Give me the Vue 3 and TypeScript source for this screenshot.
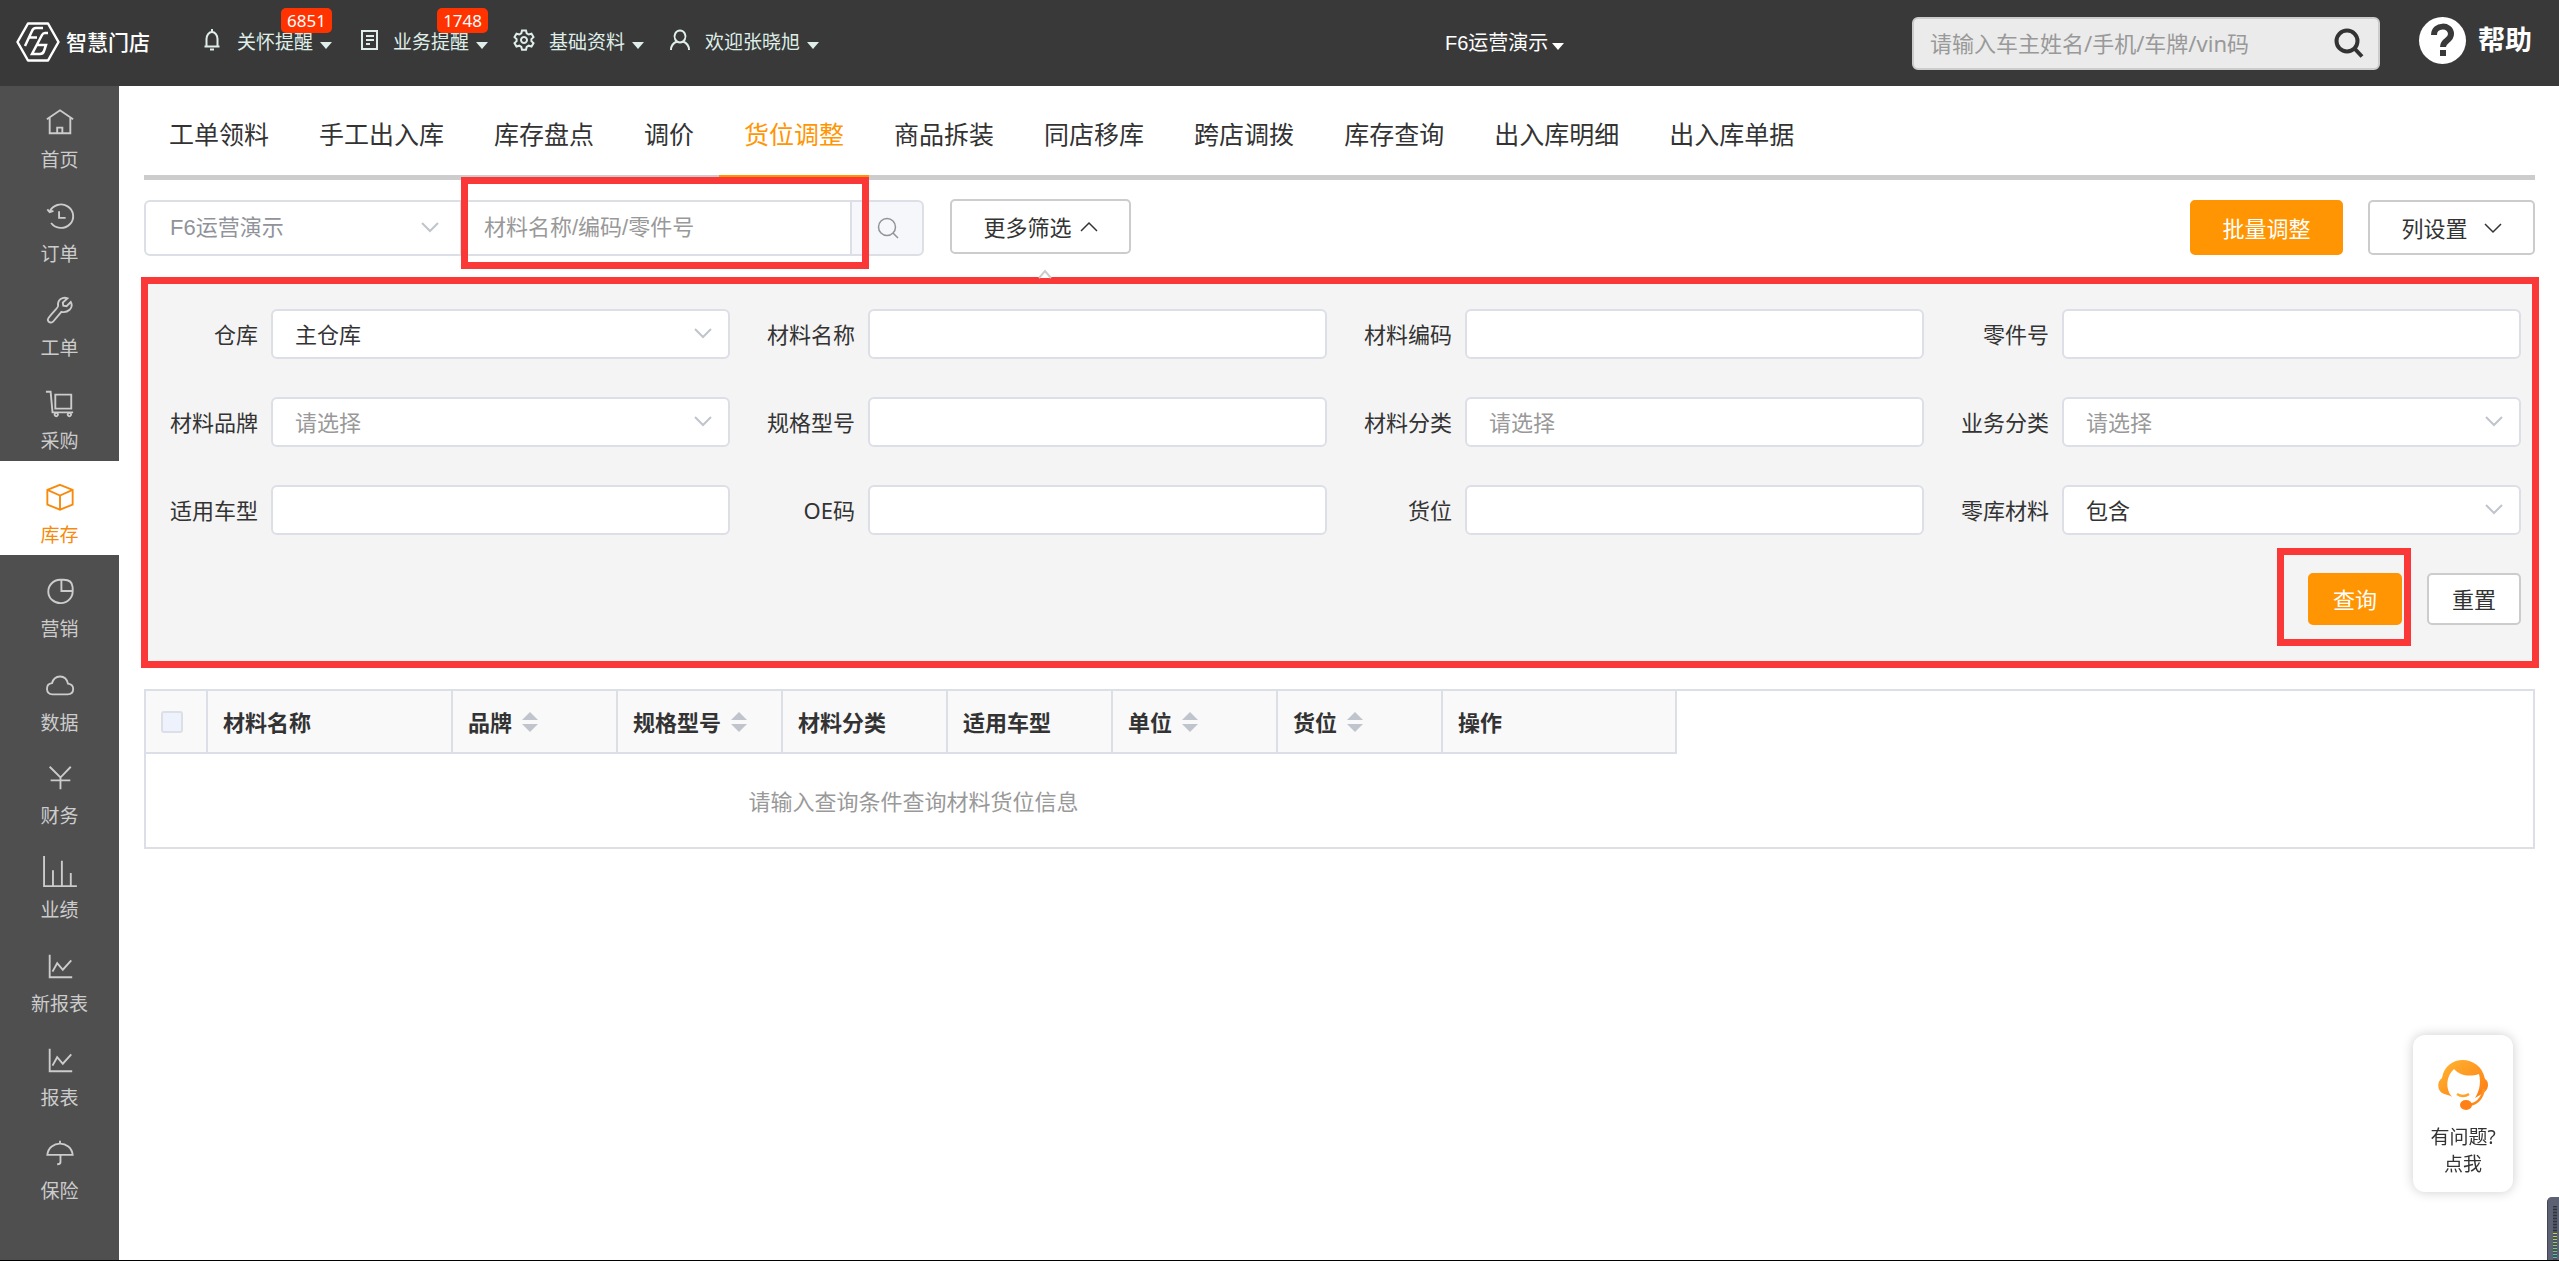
<script setup lang="ts">
import { ref } from 'vue'

interface NavItem {
  label: string
  icon: string[]
  count?: string
}

interface Field {
  id: string
  label: string
  kind: 'input' | 'select'
  value?: string
  placeholder?: string
}

interface Column {
  label: string
  width: number
  sortable?: boolean
}

const notices: NavItem[] = [
  { label: '关怀提醒', count: '6851', icon: ['M11 0v3M5.500 17V10a5.500 7 0 0 1 11 0v7M3.500 17.500h15M9 20.500h4'] },
  { label: '业务提醒', count: '1748', icon: ['M5 2h15v18H5zM9 7h8M9 11h8M9 15h4'] },
  { label: '基础资料', icon: ['M9 1.500h4l.7 2.800 2 1.200 2.800-.8 2 3.400-2.100 2v2l2.100 2-2 3.400-2.800-.8-2 1.200-.7 2.800H9l-.7-2.800-2-1.200-2.800.8-2-3.400 2.100-2v-2l-2.100-2 2-3.400 2.800.8 2-1.200z', 'M11 8a3 3 0 1 0 .01 0z'] },
  { label: '欢迎张晓旭', icon: ['M11 1.500a5.500 6 0 1 0 .01 0z', 'M2 21c0-4 2-7 6-8.500M20 21c0-4-2-7-6-8.500'] },
]

const menus: NavItem[] = [
  { label: '首页', icon: ['M2 13 16 3.500 30 13M5 11.500V28h22V11.500', 'M13 28v-6h5.500v6'] },
  { label: '订单', icon: ['M5 11.500A13 12.500 0 1 1 6.500 23.500M2.500 9l2.500 3 4-1.500', 'M15 11v7h7'] },
  { label: '工单', icon: ['M27.500 7.500 23 12l-3.500-.5L19 8l5-4.500C19 1.500 13 5 14 11.500 14.500 14 3 23 3 26.500 3.500 30 7.500 30 9 28L17.500 18C24 19.500 31 14 27.500 7.500z'] },
  { label: '采购', icon: ['M1 4h5l2 22h22', 'M11 7h17v15H11z', 'M12 26.500a1.800 1.800 0 1 0 .01 0zM26 26.500a1.800 1.800 0 1 0 .01 0z'] },
  { label: '库存', icon: ['M16 3 29.500 8.500V24L16 29.500 2.500 24V8.500z', 'M2.500 8.500 16 14.500l13.500-6M16 14.500v15'] },
  { label: '营销', icon: ['M17.500 4v12H30', 'M16 4a13 12.500 0 1 0 13.500 12V12Q29 4 20 4z'] },
  { label: '数据', icon: ['M8 26H24C32 25.500 32 15.500 24.500 14.500 22 4 10 5 7.500 14 0 15 .5 25.500 8 26z'] },
  { label: '财务', icon: ['M5 4l11.500 11.500L27.500 4M6 18.500h21M16.500 15.500V28'] },
  { label: '业绩', icon: ['M-1 -1v32h35M8.500 31V14M18 31V4M27.500 31V17'] },
  { label: '新报表', icon: ['M5 4v24h24M8 22l5-9 6 7 9-10'] },
  { label: '报表', icon: ['M5 4v24h24M8 22l5-9 6 7 9-10'] },
  { label: '保险', icon: ['M2.500 18C4 2 28 2 29.500 18zM16 3v3M16.500 18v7.500c0 2-1.500 2.500-3.500 2.500'] },
]
const activeMenu = ref('库存')

const tabs: string[] = ['工单领料', '手工出入库', '库存盘点', '调价', '货位调整', '商品拆装', '同店移库', '跨店调拨', '库存查询', '出入库明细', '出入库单据']
const activeTab = ref('货位调整')

const fields: Field[] = [
  { id: 'warehouse', label: '仓库', kind: 'select', value: '主仓库' },
  { id: 'name', label: '材料名称', kind: 'input' },
  { id: 'code', label: '材料编码', kind: 'input' },
  { id: 'part', label: '零件号', kind: 'input' },
  { id: 'brand', label: '材料品牌', kind: 'select', placeholder: '请选择' },
  { id: 'spec', label: '规格型号', kind: 'input' },
  { id: 'category', label: '材料分类', kind: 'input', placeholder: '请选择' },
  { id: 'business', label: '业务分类', kind: 'select', placeholder: '请选择' },
  { id: 'vehicle', label: '适用车型', kind: 'input' },
  { id: 'oe', label: 'OE码', kind: 'input' },
  { id: 'slot', label: '货位', kind: 'input' },
  { id: 'zero', label: '零库材料', kind: 'select', value: '包含' },
]

const columns: Column[] = [
  { label: '材料名称', width: 245 },
  { label: '品牌', width: 165, sortable: true },
  { label: '规格型号', width: 165, sortable: true },
  { label: '材料分类', width: 165 },
  { label: '适用车型', width: 165 },
  { label: '单位', width: 165, sortable: true },
  { label: '货位', width: 165, sortable: true },
  { label: '操作', width: 234 },
]
</script>

<template>
  <div class="page">
    <header class="topbar">
      <a class="brand" href="#">
        <svg width="44" height="40" viewBox="0 0 44 40" fill="none" stroke="#fff" stroke-width="2.500">
          <path stroke-linejoin="round" d="M12 1.500h20L42.500 20 32 38.500H12L1.500 20z" />
          <path d="M27 6H20Q17 6 16 9L9 24M12.500 15.500H21" />
          <path d="M32 11H29Q27 11 26 13L16 32H24Q27 32 28 29L30 23H21" />
        </svg>
        <span>智慧门店</span>
      </a>
      <nav class="notices">
        <a v-for="item in notices" :key="item.label" class="notice" href="#">
          <svg width="22" height="22" viewBox="0 0 22 22" fill="none" stroke="#dfeee8" stroke-width="2">
            <path v-for="d in item.icon" :key="d" :d="d" />
          </svg>
          <span>{{ item.label }}</span>
          <i class="caret"></i>
          <b v-if="item.count" class="badge">{{ item.count }}</b>
        </a>
      </nav>
      <a class="shop" href="#">F6运营演示<i class="caret"></i></a>
      <form class="finder" @submit.prevent>
        <input type="text" aria-label="搜索车主" placeholder="请输入车主姓名/手机/车牌/vin码" />
        <button type="submit" aria-label="搜索">
          <svg width="30" height="30" viewBox="0 0 30 30" fill="none" stroke="#333" stroke-width="4">
            <circle cx="13" cy="13" r="10.500" />
            <path d="M20 20l8 8.500" />
          </svg>
        </button>
      </form>
      <a class="help" href="#">
        <svg width="47" height="47" viewBox="0 0 47 47">
          <circle cx="23.500" cy="23.500" r="23.500" fill="#fff" />
          <path d="M15 18c0-11 17-11 17-1 0 7-8 6-8 13" fill="none" stroke="#393939" stroke-width="6" />
          <path d="M21 33h6v6h-6z" fill="#393939" />
        </svg>
        <span>帮助</span>
      </a>
    </header>

    <div class="body">
      <aside class="sidebar">
        <nav>
          <a v-for="item in menus" :key="item.label" href="#" :class="{ active: item.label === activeMenu }" @click.prevent="activeMenu = item.label">
            <svg width="30" height="30" viewBox="0 0 32 32" fill="none" stroke="currentColor" stroke-width="2">
              <path v-for="d in item.icon" :key="d" :d="d" />
            </svg>
            <span>{{ item.label }}</span>
          </a>
        </nav>
      </aside>

      <main class="content">
        <nav class="tabs">
          <a v-for="tab in tabs" :key="tab" href="#" :class="{ active: tab === activeTab }" @click.prevent="activeTab = tab">{{ tab }}</a>
        </nav>

        <div class="toolbar">
          <div class="search">
            <div class="picker">
              <select aria-label="门店">
                <option>F6运营演示</option>
              </select>
              <svg class="chevron" width="18" height="10" viewBox="0 0 18 10"><path d="M1 1l8 8 8-8" /></svg>
            </div>
            <input type="text" aria-label="材料" placeholder="材料名称/编码/零件号" />
            <button type="button" class="addon" aria-label="查找">
              <svg width="22" height="22" viewBox="0 0 22 22" fill="none" stroke="#909399" stroke-width="1.500">
                <circle cx="10" cy="10" r="8.500" />
                <path d="M16 16l5 5" />
              </svg>
            </button>
            <div class="mark mark-search"></div>
          </div>
          <div class="more">
            <button type="button" class="btn">
              更多筛选
              <svg class="chevron dark" width="18" height="10" viewBox="0 0 18 10"><path stroke-width="1.500" d="M1 9l8-8 8 8" /></svg>
            </button>
            <svg class="pointer" width="14" height="8" viewBox="0 0 14 8"><path d="M1 8l6-7 6 7" /></svg>
          </div>
          <div class="actions">
            <button type="button" class="btn primary">批量调整</button>
            <button type="button" class="btn columns">
              列设置
              <svg class="chevron dark" width="18" height="10" viewBox="0 0 18 10"><path stroke-width="1.500" d="M1 1l8 8 8-8" /></svg>
            </button>
          </div>
        </div>

        <form class="filters" @submit.prevent>
          <div class="grid">
            <div v-for="field in fields" :key="field.id" class="field">
              <label :for="field.id">{{ field.label }}</label>
              <input v-if="field.kind === 'input'" :id="field.id" type="text" :placeholder="field.placeholder" />
              <div v-else class="picker">
                <select :id="field.id" :class="{ empty: !field.value }">
                  <option>{{ field.value || field.placeholder }}</option>
                </select>
                <svg class="chevron" width="18" height="10" viewBox="0 0 18 10"><path d="M1 1l8 8 8-8" /></svg>
              </div>
            </div>
          </div>
          <div class="submit">
            <div class="query">
              <button type="submit" class="btn primary">查询</button>
              <div class="mark mark-query"></div>
            </div>
            <button type="reset" class="btn">重置</button>
          </div>
        </form>

        <div class="results">
          <table>
            <colgroup>
              <col class="check-col" />
              <col v-for="col in columns" :key="col.label" :style="{ width: col.width + 'px' }" />
            </colgroup>
            <thead>
              <tr>
                <th class="check"><input type="checkbox" aria-label="全选" /></th>
                <th v-for="col in columns" :key="col.label">
                  <span class="head">
                    {{ col.label }}
                    <svg v-if="col.sortable" width="16" height="20" viewBox="0 0 16 20" fill="#c0c4cc">
                      <path d="M8 0l8 8H0zM8 20l8-8H0z" />
                    </svg>
                  </span>
                </th>
              </tr>
            </thead>
            <tbody>
              <tr>
                <td :colspan="columns.length + 1">请输入查询条件查询材料货位信息</td>
              </tr>
            </tbody>
          </table>
        </div>
      </main>
    </div>

    <a class="service" href="#">
      <svg width="50" height="50" viewBox="0 0 50 50">
        <defs>
          <linearGradient id="warm" x1="0" y1="0" x2="1" y2="1">
            <stop offset="0" stop-color="#ffb733" />
            <stop offset="1" stop-color="#ff7a12" />
          </linearGradient>
        </defs>
        <path fill="url(#warm)" d="M14 37C7 29 8 16 16 9c6 7 16 8 25 5 2 8 1 16-4 24l5-3c3-2 8-4 8-10 0-3-1-5-3-6C42-6 8-6 4 18c-5 3-5 12 0 15 3 2 6 1 10 4z" />
        <path fill="none" stroke="url(#warm)" stroke-width="2.500" d="M19 34q6 4 12 0M46 29q-3 15-16 16" />
        <ellipse cx="28" cy="45" rx="6" ry="5" fill="#ff8015" />
      </svg>
      <span>有问题?</span>
      <span>点我</span>
    </a>
    <div class="meter"><i></i></div>
  </div>
</template>

<style>
body {
  margin: 0;
  background: #fff;
}
</style>

<style scoped>
.page {
  display: flex;
  flex-direction: column;
  box-sizing: border-box;
  min-height: 100vh;
  border-bottom: 1px solid #000;
  color: #333;
  font-family: "Noto Sans", "Noto Sans CJK SC", sans-serif;
  font-size: 22px;
  line-height: 30px;
}
.page * {
  box-sizing: border-box;
}
a {
  color: inherit;
  text-decoration: none;
}
button,
input,
select {
  margin: 0;
  color: inherit;
  font: inherit;
}
svg {
  flex: none;
  overflow: visible;
}

.topbar {
  display: flex;
  align-items: center;
  height: 86px;
  padding: 0 27px 0 16px;
  background: #393939;
  color: #fff;
}
.brand {
  display: flex;
  align-items: center;
  gap: 6px;
  width: 185px;
  padding-bottom: 2px;
  font-size: 21px;
  font-weight: 500;
}
.notices {
  display: flex;
  gap: 25px;
  padding-bottom: 2px;
}
.notice {
  position: relative;
  display: flex;
  align-items: center;
  color: #dfeee8;
  font-size: 19px;
}
.notice > svg {
  margin-bottom: 4px;
}
.notice span {
  margin-left: 14px;
}
.caret {
  margin: 6px 0 0 7px;
  border: solid transparent;
  border-width: 7px 6px 0;
  border-top-color: currentColor;
}
.badge {
  position: absolute;
  right: 0;
  bottom: 24px;
  padding: 0 6px;
  border-radius: 5px;
  background: #f30;
  color: #fff;
  font-size: 17px;
  font-weight: 400;
  line-height: 25px;
}
.shop {
  display: flex;
  flex: 0 0 auto;
  order: 2;
  align-items: center;
  font-family: "Liberation Sans", "Noto Sans CJK SC", sans-serif;
  font-size: 20px;
}
.shop .caret {
  margin-left: 4px;
}
.topbar::before,
.topbar::after {
  content: "";
}
.topbar::before {
  order: 1;
  flex: 9;
}
.topbar::after {
  order: 3;
  flex: 5;
}
.finder {
  display: flex;
  order: 4;
  align-items: center;
  width: 468px;
  height: 53px;
  padding: 0 14px 0 16px;
  border: 2px solid #ccc;
  border-radius: 6px;
  background: #ebebeb;
}
.finder input {
  flex: 1;
  min-width: 0;
  padding: 0;
  border: 0;
  background: none;
}
.finder button {
  display: flex;
  padding: 0;
  border: 0;
  background: none;
}
input::placeholder {
  color: #999;
  opacity: 1;
}
.help {
  display: flex;
  order: 5;
  align-items: center;
  gap: 12px;
  margin-left: 39px;
  padding-bottom: 6px;
  font-size: 27px;
  font-weight: 700;
}

.body {
  display: flex;
  flex: 1;
}
.sidebar {
  flex: none;
  width: 119px;
  background: #4f4f4f;
  color: #ccc;
}
.sidebar nav {
  display: grid;
  grid-auto-rows: 1fr;
  min-height: 1125px;
}
.sidebar a {
  display: flex;
  flex-direction: column;
  align-items: center;
  padding-top: 21px;
  font-size: 19px;
  line-height: 28px;
}
.sidebar span {
  margin-top: 9px;
}
.sidebar .active {
  background: #fff;
  color: #f78a0d;
}

.content {
  flex: 1;
  min-width: 0;
  padding: 0 24px 0 25px;
}
.tabs {
  display: flex;
  height: 94px;
  border-bottom: 5px solid #ccc;
  font-size: 25px;
}
.tabs a {
  height: 94px;
  padding: 0 25px;
  line-height: 96px;
}
.tabs .active {
  border-bottom: 5px solid #ff9502;
  color: #ff9502;
}

.toolbar {
  display: flex;
  margin-top: 20px;
}
.search {
  position: relative;
  display: flex;
  width: 780px;
  height: 56px;
  color: #909399;
  font-family: "Liberation Sans", "Noto Sans CJK SC", sans-serif;
}
.search > .picker {
  width: 318px;
}
.search select {
  padding: 0 24px;
  border-radius: 6px 0 0 6px;
}
.search > input {
  flex: 1;
  min-width: 0;
  padding: 0 22px;
  border: solid #dcdfe6;
  border-width: 2px 0;
}
.addon {
  display: flex;
  align-items: center;
  width: 74px;
  padding: 0 0 0 25px;
  border: 2px solid #dcdfe6;
  border-radius: 0 6px 6px 0;
  background: #f5f7fa;
}
.picker {
  position: relative;
  display: flex;
  flex: 1;
  min-width: 0;
}
.search > .picker {
  flex: none;
}
select {
  width: 100%;
  padding: 0 22px;
  border: 2px solid #dcdfe6;
  border-radius: 6px;
  outline: 0;
  background: #fff;
  appearance: none;
}
.empty {
  color: #999;
}
.chevron {
  fill: none;
  stroke: #c0c4cc;
  stroke-width: 2;
}
.picker .chevron {
  position: absolute;
  top: calc(50% - 6px);
  right: 18px;
}
.search .chevron {
  right: 23px;
}
.dark {
  stroke: #333;
}
.mark {
  position: absolute;
  border: 7px solid #fb3838;
  pointer-events: none;
}
.mark-search {
  inset: -23px 55px -13px 317px;
}
.mark-query {
  inset: -25px -9px -21px -31px;
}
.btn {
  display: flex;
  align-items: center;
  justify-content: center;
  padding: 0;
  border: 2px solid #ccc;
  border-radius: 5px;
  background: #fff;
}
.btn.primary {
  border-color: #ff9502;
  background: #ff9502;
  color: #fff;
}
.more {
  position: relative;
  margin: -1px 0 0 26px;
}
.more .btn {
  gap: 8px;
  width: 181px;
  height: 55px;
}
.pointer {
  position: absolute;
  top: 71px;
  left: 88px;
  fill: #fff;
  stroke: #ccc;
  stroke-width: 2;
}
.actions {
  display: flex;
  gap: 25px;
  margin-left: auto;
}
.actions .btn {
  width: 153px;
  height: 55px;
}
.actions .columns {
  gap: 16px;
  width: 167px;
}

.filters {
  margin: 21px -4px 0 -3px;
  padding: 25px 11px 36px 22px;
  border: 7px solid #fb3838;
  background: #f4f4f4;
}
.grid {
  display: grid;
  grid-template-columns: repeat(4, 1fr);
  gap: 38px 37px;
}
.field {
  display: flex;
  gap: 13px;
  align-items: center;
}
.field label {
  width: 88px;
  text-align: right;
}
.field > input {
  flex: 1;
  min-width: 0;
  height: 50px;
  padding: 0 22px;
  border: 2px solid #dcdfe6;
  border-radius: 6px;
  background: #fff;
}
.field .picker {
  height: 50px;
}
.submit {
  display: flex;
  justify-content: flex-end;
  gap: 25px;
  margin-top: 38px;
}
.submit .btn {
  width: 94px;
  height: 52px;
}
.query {
  position: relative;
}

.results {
  margin-top: 21px;
  border: 2px solid #dcdfe6;
}
table {
  width: 1531px;
  border-spacing: 0;
  table-layout: fixed;
}
.check-col {
  width: 62px;
}
th {
  height: 63px;
  padding: 0 0 0 15px;
  border: solid #dcdfe6;
  border-width: 0 2px 2px 0;
  background: #f9f9f9;
  text-align: left;
}
.head {
  display: flex;
  gap: 10px;
  align-items: center;
}
.check input {
  display: block;
  width: 22px;
  height: 22px;
  border: 2px solid #dcdfe6;
  border-radius: 3px;
  background: #edf2fc;
  appearance: none;
}
td {
  height: 93px;
  padding: 0 0 0 4px;
  color: #999;
  text-align: center;
}

.service {
  position: fixed;
  right: 46px;
  bottom: 69px;
  display: flex;
  flex-direction: column;
  align-items: center;
  width: 100px;
  height: 157px;
  padding-top: 25px;
  border-radius: 12px;
  background: #fff;
  box-shadow: 0 0 12px rgba(0, 0, 0, 0.2);
  font-size: 19px;
  line-height: 27px;
}
.service svg {
  margin-bottom: 14px;
}
.meter {
  position: fixed;
  right: 0;
  bottom: 1px;
  width: 12px;
  height: 63px;
  padding: 9px 2px 0 5px;
  border-left: 1px solid #42464f;
  border-radius: 5px 0 0 0;
  background: #5c6273;
}
.meter i {
  display: block;
  height: 54px;
  background:
    repeating-linear-gradient(transparent 0 1px, #4b505e 1px 3px),
    linear-gradient(#2f333c 0 50%, #c8d640 50%, #3fc3a5 100%);
}
</style>
